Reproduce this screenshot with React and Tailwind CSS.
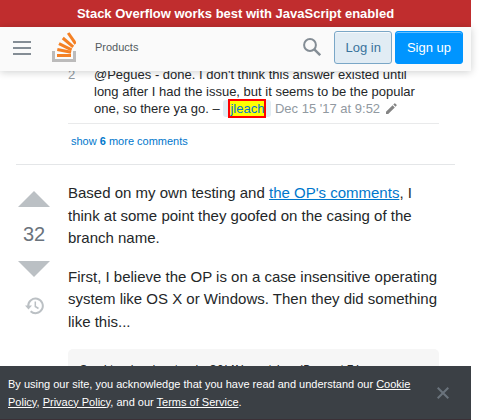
const arial = "font-['Liberation_Sans',Arial,sans-serif]";

function Logo() {
  return (
    <svg className="h-[31px] w-6" viewBox="0 0 24 31" aria-hidden="true">
      <path d="M1.5 19v9.500h21V19" fill="none" stroke="#bcbbbb" strokeWidth="3" />
      <g stroke="#f48024" strokeWidth="3">
        <path d="M5 23.500h14" />
        <path d="M5.300 17.500l13.800 2.800" />
        <path d="M7 11.700l12.600 6.100" />
        <path d="M10.800 6l10.400 8.800" />
        <path d="M16.200 1l7.500 10.800" />
      </g>
    </svg>
  );
}

function Banner() {
  return (
    <div className="h-[27px] shrink-0 bg-[#c02d2e] text-center text-[13px] leading-[27px] font-bold text-white">
      Stack Overflow works best with JavaScript enabled
    </div>
  );
}

function Header() {
  return (
    <header className="relative z-10 flex h-11 shrink-0 items-center bg-[#fafafa] pr-2 shadow-[0_1px_8px_rgba(12,13,14,0.2)]">
      <button aria-label="Menu" className="flex h-11 w-11 items-start justify-center pt-[14px]">
        <span className="flex w-[18px] flex-col gap-1">
          <span className="h-0.5 bg-[#848d95]" />
          <span className="h-0.5 bg-[#848d95]" />
          <span className="h-0.5 bg-[#848d95]" />
        </span>
      </button>
      <a href="#home" aria-label="Stack Overflow" className="ml-2 flex h-11 items-start pt-[5px]">
        <Logo />
      </a>
      <a href="#products" className="ml-[19px] pb-1 text-[11px] text-[#535a60]">
        Products
      </a>
      <button aria-label="Search" className="ml-auto flex h-9 w-9 items-center justify-center pb-1">
        <svg className="size-[18px]" viewBox="0 0 18 18" aria-hidden="true">
          <circle cx="7" cy="7" r="5.900" fill="none" stroke="#848d95" strokeWidth="2" />
          <path d="M11.300 11.300l5.900 5.900" stroke="#848d95" strokeWidth="2.400" />
        </svg>
      </button>
      <div className="ml-1 flex gap-[3px] pb-[3px]">
        <button className="h-[33px] rounded-[3px] border border-[#7aa7c7] bg-[#e1ecf4] px-[10px] text-[13px] text-[#39739d] shadow-[inset_0_1px_0_rgba(255,255,255,0.7)]">
          Log in
        </button>
        <button className="h-[33px] rounded-[3px] border border-[#0095ff] bg-[#0095ff] px-[11px] text-[13px] text-white shadow-[inset_0_1px_0_rgba(255,255,255,0.4)]">
          Sign up
        </button>
      </div>
    </header>
  );
}

function Comment() {
  return (
    <div className="ml-[52px] pr-4">
      <div className="flex border-b border-[#e9eaeb] pb-[6px] text-[13px] leading-[17px]">
        <span className="w-[26px] shrink-0 text-[#9199a1]">2</span>
        <p className="pr-2 text-[#242729]">
          @Pegues - done. I don't think this answer existed until long after I had the issue, but it
          seems to be the popular one, so there ya go. –{" "}
          <a href="#jleach" className="rounded-[3px] bg-[#e1ecf4] px-[7px] py-px text-[#0077cc]">
            <span className="bg-[#ffff00] outline-2 outline-[#ff0000]">jleach</span>
          </a>{" "}
          <span className="text-[#9199a1]">Dec 15 '17 at 9:52</span>
          <svg className="ml-[5px] inline-block size-3 align-[-2px]" viewBox="0 0 12 12" aria-hidden="true">
            <path d="M1 8.800L7.600 2.200l2.200 2.200L3.200 11H1zM8.300 1.500L9.400.400q.400-.400.800 0l1.400 1.400q.400.400 0 .800l-1.100 1.100z" fill="#848484" />
          </svg>
        </p>
      </div>
      <a href="#comments" className="ml-[3px] block pt-[9px] text-[11px] leading-[17px] text-[#0077cc]">
        show <b>6</b> more comments
      </a>
    </div>
  );
}

function Votes() {
  return (
    <div className="flex w-9 shrink-0 flex-col items-center">
      <button aria-label="Up vote" className="flex h-9 w-9 items-center justify-center">
        <svg className="h-4 w-8" viewBox="0 0 32 16" aria-hidden="true">
          <path d="M0 16L16 0l16 16z" fill="#bbc0c4" />
        </svg>
      </button>
      <span className="py-1 text-[20px] leading-[26px] text-[#6a737c]">32</span>
      <button aria-label="Down vote" className="flex h-9 w-9 items-center justify-center">
        <svg className="h-4 w-8" viewBox="0 0 32 16" aria-hidden="true">
          <path d="M0 0h32L16 16z" fill="#bbc0c4" />
        </svg>
      </button>
      <a href="#timeline" aria-label="Timeline" className="mt-[10px]">
        <svg className="h-[18px] w-[19px]" viewBox="0 0 19 18" aria-hidden="true">
          <path d="M3.200 9a7.300 7.300 0 1 1 2.400 5.300" fill="none" stroke="#bbc0c4" strokeWidth="2" />
          <path d="M0 8.500h7L3.500 12.500z" fill="#bbc0c4" />
          <path d="M10.300 4.500v5l3.200 2" fill="none" stroke="#bbc0c4" strokeWidth="1.500" />
        </svg>
      </a>
    </div>
  );
}

function Answer() {
  return (
    <article className="flex items-start gap-4 pt-4">
      <Votes />
      <div className="flex min-w-0 flex-1 flex-col gap-4 pt-px pr-4 text-[15px] leading-normal text-[#242729]">
        <p>
          Based on my own testing and{" "}
          <a href="#op-comments" className="text-[#0077cc] underline">
            the OP's comments
          </a>
          , I think at some point they goofed on the casing of the branch name.
        </p>
        <p>
          First, I believe the OP is on a case insensitive operating system like OS X or Windows. Then
          they did something like this...
        </p>
        <pre className="overflow-hidden rounded-[5px] bg-[#f6f6f6] px-3 pt-[14px] pb-3 font-['Liberation_Mono',monospace] text-[12px] leading-[17px]">
          <code>$ git checkout -b SQLMigration/ReportFixes</code>
        </pre>
      </div>
    </article>
  );
}

function CookieNotice() {
  return (
    <footer className="flex h-[54px] shrink-0 items-center border-b border-[#3b3036] bg-[#3b4045] pr-[22px] pl-2 text-[11px] leading-[18px] text-white">
      <p className="flex-1 pr-5">
        By using our site, you acknowledge that you have read and understand our{" "}
        <a href="#cookies" className="underline">Cookie Policy</a>,{" "}
        <a href="#privacy" className="underline">Privacy Policy</a>, and our{" "}
        <a href="#terms" className="underline">Terms of Service</a>.
      </p>
      <button aria-label="Close">
        <svg className="size-3" viewBox="0 0 12 12" aria-hidden="true">
          <path d="M.700.700l10.600 10.600M11.300.700L.700 11.300" stroke="#6a737c" strokeWidth="2" />
        </svg>
      </button>
    </footer>
  );
}

export default function App() {
  return (
    <div className={`h-screen bg-white pr-[17px] ${arial}`}>
      <div className="flex h-full flex-col">
        <Banner />
        <Header />
        <main className="min-h-0 flex-1 overflow-hidden px-4">
          <div className="-mt-[5px]">
            <Comment />
            <div className="mt-[14px] border-t border-[#e4e6e8]" />
            <Answer />
          </div>
        </main>
        <CookieNotice />
      </div>
    </div>
  );
}
